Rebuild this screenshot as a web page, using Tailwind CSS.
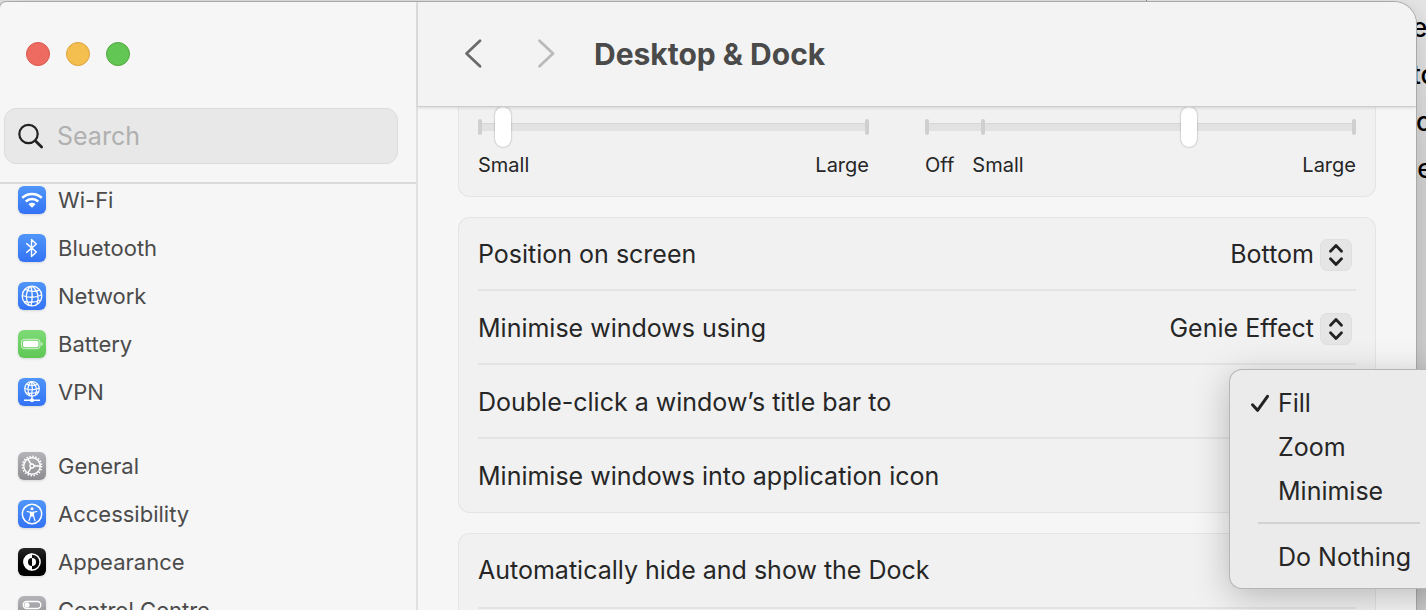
<!DOCTYPE html>
<html lang="en-GB">
<head>
  <meta charset="UTF-8" />
  <meta name="viewport" content="width=device-width, initial-scale=1.0" />
  <title>Desktop & Dock</title>
  <script src="https://cdn.jsdelivr.net/npm/@tailwindcss/browser@4"></script>
</head>
<body class="relative flex h-screen overflow-hidden bg-[#dfdfdf] pt-0.5 pr-2.5 font-[Inter,'Liberation_Sans',sans-serif] text-[#262626]">

  <!-- Document window behind the settings window -->
  <div class="absolute inset-y-0 right-0 w-[280px] border-l border-[#8a8a8a] bg-linear-to-b from-[#e4e4e4] to-[#cecece] to-30%">
    <div class="absolute top-1 right-0 flex w-3.5 flex-col text-[26px] leading-[47px] font-medium text-black">
      <span>e</span>
      <span>to</span>
      <span class="pl-1">o</span>
      <span class="-ml-2.5">ee</span>
    </div>
  </div>

  <!-- Settings window -->
  <div class="relative flex min-w-0 flex-1 overflow-hidden rounded-tl-md rounded-tr-[22px] bg-[#f6f6f6] shadow-[0_0_0_1px_#a9a9a9,0_4px_20px_rgba(0,0,0,0.12)]">

    <!-- Sidebar -->
    <aside class="flex w-[418px] shrink-0 flex-col border-r-2 border-[#e0e0e0]">
      <div class="flex gap-4 pt-10 pl-[26px]">
        <button aria-label="Close" class="size-6 rounded-full border border-[#d9574c] bg-[#ed6b60]"></button>
        <button aria-label="Minimise" class="size-6 rounded-full border border-[#dba33f] bg-[#f5bf50]"></button>
        <button aria-label="Zoom" class="size-6 rounded-full border border-[#50a83c] bg-[#62c655]"></button>
      </div>

      <div class="border-b-2 border-[#dadada] pt-[42px] pr-[18px] pb-[18px] pl-1">
        <label class="flex h-14 items-center gap-3 rounded-xl border border-[#dcdcdc] bg-[#e8e8e8] pl-3">
          <svg class="size-7 shrink-0" viewBox="0 0 28 28" fill="none" stroke="#222" stroke-linecap="round">
            <circle cx="11.5" cy="12" r="9.2" stroke-width="2.2" />
            <path d="M18.3 18.8L24.6 25" stroke-width="2.8" />
          </svg>
          <input type="search" placeholder="Search" aria-label="Search" class="w-full bg-transparent pt-0.5 text-[25px] outline-none placeholder:text-[#b0b0b0]" />
        </label>
      </div>

      <nav class="min-h-0 flex-1 overflow-hidden text-[22px] text-[#4b4b4b]">
        <ul class="-mt-2 pl-[18px]">
          <li><a href="#wifi" class="flex h-12 items-center gap-3">
            <svg class="size-7 rounded-md bg-linear-to-b from-[#5096f8] to-[#3472f5] shadow-sm" viewBox="0 0 28 28" fill="none" stroke="#fff" stroke-width="2.5">
              <path d="M4.2 11.9a14 14 0 0 1 19.6 0M7.8 15.5a8.9 8.9 0 0 1 12.4 0" />
              <path d="M14 21.8l-3.5-3.5a5 5 0 0 1 7 0z" fill="#fff" stroke="none" />
            </svg>
            Wi-Fi</a></li>
          <li><a href="#bluetooth" class="flex h-12 items-center gap-3">
            <svg class="size-7 rounded-md bg-linear-to-b from-[#5096f8] to-[#3472f5] shadow-sm" viewBox="0 0 28 28" fill="none" stroke="#fff" stroke-width="1.4" stroke-linejoin="round" stroke-linecap="round">
              <path d="M8.7 9.6l9.6 8.4-4.8 4.6V5.4l4.8 4.6-9.6 8.4" />
            </svg>
            Bluetooth</a></li>
          <li><a href="#network" class="flex h-12 items-center gap-3">
            <svg class="size-7 rounded-md bg-linear-to-b from-[#5096f8] to-[#3472f5] shadow-sm" viewBox="0 0 28 28" fill="none" stroke="#fff" stroke-width="1.3">
              <circle cx="14" cy="14" r="9.8" />
              <path d="M12.5 4.3c-5 5-5.5 13.5-1 19.2M13 4.3c1.5 6 1.6 13 0 19.5M14 4.3c6 4 7.5 12 5 17.5M7 7.3c4.5 2.5 10.5 2.5 14.8.6M4.3 13.5c6 2.3 13.5 2 19.3-.5M6 19.5c5 1.2 11.5.8 16.5-1.5" />
            </svg>
            Network</a></li>
          <li><a href="#battery" class="flex h-12 items-center gap-3">
            <svg class="size-7 rounded-md bg-linear-to-b from-[#7edb77] to-[#5fc755] shadow-sm" viewBox="0 0 28 28">
              <rect x="3.5" y="9.3" width="18.5" height="9.4" rx="2.8" fill="none" stroke="#d5f3d2" stroke-width="1" />
              <rect x="5" y="10.8" width="15.5" height="6.4" rx="1.6" fill="#fff" />
              <path d="M23.2 12.2c2 .6 2 3 0 3.6z" fill="#d5f3d2" />
            </svg>
            Battery</a></li>
          <li><a href="#vpn" class="flex h-12 items-center gap-3">
            <svg class="size-7 rounded-md bg-linear-to-b from-[#5096f8] to-[#3472f5] shadow-sm" viewBox="0 0 28 28" fill="none" stroke="#fff" stroke-width="1.2">
              <circle cx="14" cy="10.8" r="7.3" />
              <path d="M12.8 3.7c-3.5 4-3.8 10-.8 14M13.5 3.7c1 4.5 1 10 0 14.3M14 3.7c4.5 3.5 5.3 8.500 3.5 13M8.5 6c3.500 1.7 8 1.7 11.2.4M6.8 10.5c4.5 1.7 10 1.5 14.4-.4M8.3 15c3.8.8 8.3.5 12-1.2" />
              <path d="M14 18v3M6 22.3h16" stroke-width="1.4" />
              <circle cx="14" cy="22.3" r="2" fill="#fff" stroke="none" />
            </svg>
            VPN</a></li>
        </ul>

        <ul class="pt-[26px] pl-[18px]">
          <li><a href="#general" class="flex h-12 items-center gap-3">
            <svg class="size-7 rounded-md bg-linear-to-b from-[#b4b4b8] to-[#8c8c91] shadow-sm" viewBox="0 0 28 28" fill="none" stroke="#fff">
              <circle cx="14" cy="14" r="9.6" stroke-width="1.6" stroke-dasharray="1.5 1.516" />
              <circle cx="14" cy="14" r="8.3" stroke-width="1.4" />
              <circle cx="14" cy="14" r="2" stroke-width="1.3" />
              <path d="M16 14h6.3M13 12.3L9.900 6.8M13 15.7l-3.1 5.5" stroke-width="1.4" />
            </svg>
            General</a></li>
          <li><a href="#accessibility" class="flex h-12 items-center gap-3">
            <svg class="size-7 rounded-md bg-linear-to-b from-[#5096f8] to-[#3472f5] shadow-sm" viewBox="0 0 28 28" fill="none" stroke="#fff">
              <circle cx="14" cy="14" r="9.7" stroke-width="1.5" />
              <circle cx="14" cy="8.7" r="1.5" fill="#fff" stroke="none" />
              <path d="M9.2 11.5l3.3.8v3.5l-1.5 5M18.8 11.5l-3.3.8v3.5l1.5 5" stroke-width="1.2" stroke-linecap="round" />
              <path d="M12.2 11.8h3.6v4.7h-3.6z" fill="#fff" stroke="none" />
            </svg>
            Accessibility</a></li>
          <li><a href="#appearance" class="flex h-12 items-center gap-3">
            <svg class="size-7 rounded-md bg-linear-to-b from-[#262626] to-black shadow-sm" viewBox="0 0 28 28">
              <circle cx="14" cy="14" r="8.1" fill="none" stroke="#fff" stroke-width="1.5" />
              <path d="M14 5.5a8.5 8.5 0 0 0 0 17v-4.5a4 4 0 0 1 0-8z" fill="#fff" />
              <path d="M14 10a4 4 0 0 1 0 8z" fill="#fff" />
            </svg>
            Appearance</a></li>
          <li><a href="#control-centre" class="flex h-12 items-center gap-3">
            <svg class="size-7 rounded-md bg-linear-to-b from-[#b4b4b8] to-[#8c8c91] shadow-sm" viewBox="0 0 28 28" fill="none" stroke="#fff" stroke-width="1.4">
              <rect x="5.2" y="5.5" width="17.6" height="7" rx="3.5" />
              <circle cx="9" cy="9" r="2.6" fill="#fff" stroke="none" />
              <rect x="5" y="15.5" width="18" height="7.5" rx="3.7" fill="#fff" />
            </svg>
            Control Centre</a></li>
        </ul>
      </nav>
    </aside>

    <!-- Content -->
    <main class="flex min-w-0 flex-1 flex-col">
      <header class="relative z-10 flex h-[105px] shrink-0 items-center border-b border-[#cdcdcd] bg-[#f3f3f3] pl-[46px] shadow-[0_1px_3px_rgba(0,0,0,0.12)]">
        <button aria-label="Back">
          <svg class="h-8 w-5" viewBox="0 0 20 32" fill="none" stroke="#6b6b6b" stroke-width="2.8" stroke-linecap="round" stroke-linejoin="round"><path d="M16 2.800L2.5 15.5L16 28.2" /></svg>
        </button>
        <button aria-label="Forward" disabled class="ml-[52px]">
          <svg class="h-8 w-5" viewBox="0 0 20 32" fill="none" stroke="#bababa" stroke-width="2.8" stroke-linecap="round" stroke-linejoin="round"><path d="M3.5 2.8L17 15.5L3.5 28.2" /></svg>
        </button>
        <h1 class="ml-[38px] text-[30px] font-bold text-[#4a4a4a]">Desktop & Dock</h1>
      </header>

      <div class="flex min-h-0 flex-1 flex-col gap-5 overflow-hidden px-10 text-[25px]">

        <section class="-mt-10 grid shrink-0 grid-cols-[391fr_431fr] gap-x-14 rounded-xl bg-[#f1f1f1] px-5 pt-10 pb-4 text-[20px] inset-ring inset-ring-[#e4e4e4]">
          <div>
            <div class="relative flex h-10 items-center">
              <div class="h-2 w-full bg-[#e2e2e2] inset-shadow-2xs"></div>
              <span class="absolute left-0 h-4 w-1 rounded-full bg-[#cfcfcf]"></span>
              <span class="absolute right-0 h-4 w-1 rounded-full bg-[#cfcfcf]"></span>
              <input type="range" min="0" max="1000" value="45" aria-label="Size" class="absolute inset-0 w-full appearance-none bg-transparent [&::-webkit-slider-thumb]:h-10 [&::-webkit-slider-thumb]:w-4 [&::-webkit-slider-thumb]:appearance-none [&::-webkit-slider-thumb]:rounded-full [&::-webkit-slider-thumb]:bg-white [&::-webkit-slider-thumb]:shadow-[0_0_2px_rgba(0,0,0,0.4)]" />
            </div>
            <div class="mt-0.5 flex h-8 items-center justify-between"><span>Small</span><span>Large</span></div>
          </div>
          <div>
            <div class="relative flex h-10 items-center">
              <div class="h-2 w-full bg-[#e2e2e2] inset-shadow-2xs"></div>
              <span class="absolute left-0 h-4 w-1 rounded-full bg-[#cfcfcf]"></span>
              <span class="absolute left-14 h-4 w-1 rounded-full bg-[#cfcfcf]"></span>
              <span class="absolute right-0 h-4 w-1 rounded-full bg-[#cfcfcf]"></span>
              <input type="range" min="0" max="1000" value="617" aria-label="Magnification" class="absolute inset-0 w-full appearance-none bg-transparent [&::-webkit-slider-thumb]:h-10 [&::-webkit-slider-thumb]:w-4 [&::-webkit-slider-thumb]:appearance-none [&::-webkit-slider-thumb]:rounded-full [&::-webkit-slider-thumb]:bg-white [&::-webkit-slider-thumb]:shadow-[0_0_2px_rgba(0,0,0,0.4)]" />
            </div>
            <div class="mt-0.5 flex h-8 items-center"><span>Off</span><span class="ml-[18px]">Small</span><span class="ml-auto">Large</span></div>
          </div>
        </section>

        <section class="shrink-0 rounded-xl bg-[#f1f1f1] px-5 inset-ring inset-ring-[#e4e4e4]">
          <div class="flex h-[74px] items-center justify-between border-b-2 border-[#e4e4e4] pt-1">
            <label for="position">Position on screen</label>
            <div class="relative mr-1 flex items-center">
              <select id="position" class="field-sizing-content appearance-none bg-transparent pr-[38px]">
                <option>Left</option>
                <option selected>Bottom</option>
                <option>Right</option>
              </select>
              <svg class="pointer-events-none absolute right-0 size-8 rounded-lg bg-[#e5e5e5] inset-ring inset-ring-[#dfdfdf]" viewBox="0 0 32 32" fill="none" stroke="#222" stroke-width="2.8" stroke-linecap="round" stroke-linejoin="round"><path d="M10.5 12.2L16 6.5l5.5 5.7M10.5 19.8L16 25.5l5.5-5.7" /></svg>
            </div>
          </div>
          <div class="flex h-[74px] items-center justify-between border-b-2 border-[#e4e4e4] pt-1">
            <label for="effect">Minimise windows using</label>
            <div class="relative mr-1 flex items-center">
              <select id="effect" class="field-sizing-content appearance-none bg-transparent pr-[38px]">
                <option selected>Genie Effect</option>
                <option>Scale Effect</option>
              </select>
              <svg class="pointer-events-none absolute right-0 size-8 rounded-lg bg-[#e5e5e5] inset-ring inset-ring-[#dfdfdf]" viewBox="0 0 32 32" fill="none" stroke="#222" stroke-width="2.8" stroke-linecap="round" stroke-linejoin="round"><path d="M10.5 12.2L16 6.5l5.5 5.7M10.5 19.8L16 25.5l5.5-5.7" /></svg>
            </div>
          </div>
          <div class="flex h-[74px] items-center border-b-2 border-[#e4e4e4] pt-1">Double-click a window’s title bar to</div>
          <div class="flex h-[74px] items-center border-b-2 border-transparent pt-1">Minimise windows into application icon</div>
        </section>

        <section class="h-40 shrink-0 rounded-xl bg-[#f1f1f1] px-5 inset-ring inset-ring-[#e4e4e4]">
          <div class="flex h-[76px] items-center border-b-2 border-[#e4e4e4] pt-0.5">Automatically hide and show the Dock</div>
        </section>
      </div>
    </main>
  </div>

  <!-- Open pop-up menu, runs past the right edge of the screen -->
  <div role="menu" class="absolute top-[370px] -right-[22px] flex w-[218px] flex-col rounded-xl bg-[#ebebeb] pt-3 pb-2 text-[25px] shadow-[0_0_0_1px_#b5b5b5,0_8px_36px_rgba(0,0,0,0.25)]">
    <button role="menuitemradio" aria-checked="true" class="flex h-11 items-center pl-5">
      <svg class="mr-2 size-5" viewBox="0 0 20 20" fill="none" stroke="#222" stroke-width="3" stroke-linecap="round" stroke-linejoin="round"><path d="M2.5 10.8L7.5 16.3L17.5 2.3" /></svg>
      Fill</button>
    <button role="menuitemradio" aria-checked="false" class="flex h-11 items-center pl-12">Zoom</button>
    <button role="menuitemradio" aria-checked="false" class="flex h-11 items-center pl-12">Minimise</button>
    <hr class="mx-7 mt-2 mb-3 border-t-2 border-[#d2d2d2]" />
    <button role="menuitemradio" aria-checked="false" class="flex h-11 items-center pl-12 whitespace-nowrap">Do Nothing</button>
  </div>

</body>
</html>
